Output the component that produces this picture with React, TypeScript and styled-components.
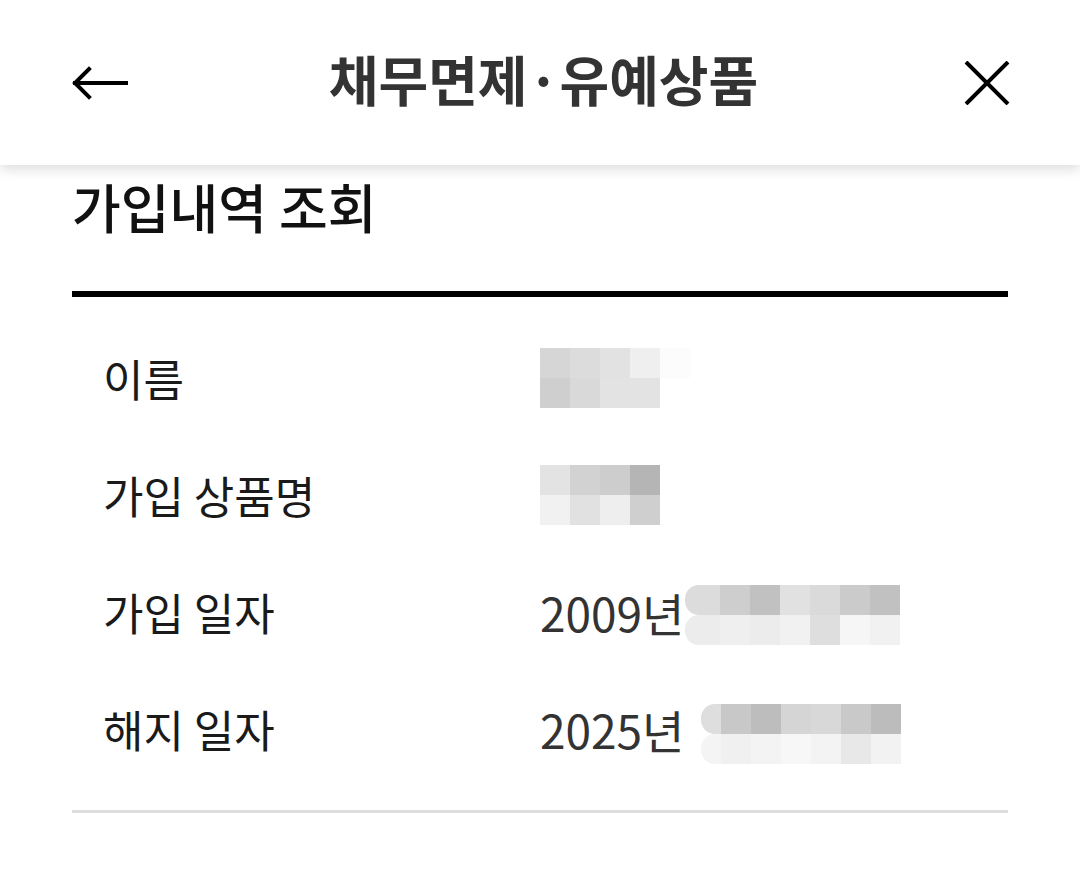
import styled, { createGlobalStyle } from 'styled-components';

const GlobalStyle = createGlobalStyle`
  html, body {
    margin: 0;
    padding: 0;
    background: #ffffff;
  }
  body {
    font-family: 'Noto Sans CJK KR', 'Noto Sans', sans-serif;
    color: #111111;
  }
`;

const Page = styled.div`
  width: 1080px;
  height: 893px;
  background: #ffffff;
  overflow: hidden;
`;

const Header = styled.header`
  position: relative;
  z-index: 1;
  height: 165px;
  display: grid;
  grid-template-columns: 60px 1fr 60px;
  align-items: center;
  padding: 0 63px 0 70px;
  background: #ffffff;
  box-shadow: 0 4px 12px rgba(0, 0, 0, 0.14);
`;

const IconButton = styled.button`
  display: flex;
  align-items: center;
  justify-content: center;
  width: 60px;
  height: 60px;
  padding: 0;
  border: 0;
  background: none;
  color: #000000;
`;

const HeaderTitle = styled.h1`
  margin: -8px 0 0;
  text-align: center;
  font-size: 54px;
  font-weight: 700;
  letter-spacing: 0;
  color: #333333;
  line-height: 1;
`;

const Content = styled.main`
  padding: 0 72px;
`;

const SectionTitle = styled.h2`
  margin: 12px 0 0;
  height: 58px;
  font-size: 53px;
  font-weight: 500;
  line-height: 58px;
  color: #111111;
`;

const InfoList = styled.dl`
  margin: 56px 0 0;
  padding: 22px 0 23px;
  border-top: 6px solid #000000;
  border-bottom: 3px solid #dddddd;
`;

const InfoRow = styled.div`
  display: grid;
  grid-template-columns: 468px 1fr;
  align-items: center;
  height: 117px;
`;

const Label = styled.dt`
  margin: 0;
  padding-left: 31px;
  font-size: 44px;
  font-weight: 400;
  color: #1a1a1a;
`;

const Value = styled.dd`
  margin: 0;
  display: flex;
  align-items: center;
  font-size: 46px;
  color: #333333;
`;

const Mosaic = styled.div<{ $shift: number; $gap: number }>`
  display: grid;
  grid-auto-flow: row;
  margin-top: ${p => p.$shift * 2}px;
  margin-left: ${p => p.$gap}px;
`;

const MosaicLine = styled.div`
  display: flex;
`;

const Cell = styled.span<{ $w: number; $lead?: boolean }>`
  display: block;
  width: ${p => p.$w}px;
  height: 30px;
  ${p => p.$lead && 'border-radius: 14px 0 0 14px;'}
`;

type Blur = { shift: number; gap: number; lead: number; rows: string[][] };

const BlurBlock = ({ shift, gap, lead, rows }: Blur) => (
  <Mosaic $shift={shift} $gap={gap}>
    {rows.map((line, i) => (
      <MosaicLine key={i}>
        {line.map((c, j) => (
          <Cell
            key={j}
            $w={j === 0 && lead ? lead : 30}
            $lead={j === 0 && lead > 0}
            style={{ background: c }}
          />
        ))}
      </MosaicLine>
    ))}
  </Mosaic>
);

const ArrowIcon = () => (
  <svg width="56" height="34" viewBox="0 0 56 34" fill="none">
    <path
      d="M3 17 H55 M17 3 L3 17 L17 31"
      stroke="#000"
      strokeWidth="4"
      strokeLinecap="square"
      strokeLinejoin="miter"
    />
  </svg>
);

const CloseIcon = () => (
  <svg width="46" height="44" viewBox="0 0 46 44" fill="none">
    <path d="M2 1 L44 43 M44 1 L2 43" stroke="#000" strokeWidth="4" />
  </svg>
);

const rows = [
  {
    label: '이름',
    text: '',
    blur: {
      shift: 0,
      gap: 0,
      lead: 0,
      rows: [
        ['#d6d6d6', '#dcdcdc', '#e2e2e2', '#efefef', '#fcfcfc'],
        ['#cfcfcf', '#d9d9d9', '#e3e3e3', '#e3e3e3'],
      ],
    },
  },
  {
    label: '가입 상품명',
    text: '',
    blur: {
      shift: 0,
      gap: 0,
      lead: 0,
      rows: [
        ['#e3e3e3', '#d2d2d2', '#cdcdcd', '#b5b5b5'],
        ['#f1f1f1', '#e1e1e1', '#eeeeee', '#cfcfcf'],
      ],
    },
  },
  {
    label: '가입 일자',
    text: '2009년',
    blur: {
      shift: 3,
      gap: 1,
      lead: 35,
      rows: [
        ['#dcdcdc', '#cecece', '#c1c1c1', '#e1e1e1', '#dadada', '#cbcbcb', '#c1c1c1'],
        ['#ececec', '#efefef', '#ececec', '#f1f1f1', '#dedede', '#f6f6f6', '#f1f1f1'],
      ],
    },
  },
  {
    label: '해지 일자',
    text: '2025년',
    blur: {
      shift: 5,
      gap: 17,
      lead: 20,
      rows: [
        ['#dedede', '#c8c8c8', '#bdbdbd', '#d5d5d5', '#d8d8d8', '#c9c9c9', '#bcbcbc'],
        ['#f4f4f4', '#f0f0f0', '#f3f3f3', '#f7f7f7', '#f3f3f3', '#e8e8e8', '#f2f2f2'],
      ],
    },
  },
];

export default function App() {
  return (
    <Page>
      <GlobalStyle />
      <Header>
        <IconButton aria-label="뒤로">
          <ArrowIcon />
        </IconButton>
        <HeaderTitle>채무면제·유예상품</HeaderTitle>
        <IconButton aria-label="닫기">
          <CloseIcon />
        </IconButton>
      </Header>
      <Content>
        <SectionTitle>가입내역 조회</SectionTitle>
        <InfoList>
          {rows.map(r => (
            <InfoRow key={r.label}>
              <Label>{r.label}</Label>
              <Value>
                {r.text}
                <BlurBlock {...r.blur} />
              </Value>
            </InfoRow>
          ))}
        </InfoList>
      </Content>
    </Page>
  );
}
